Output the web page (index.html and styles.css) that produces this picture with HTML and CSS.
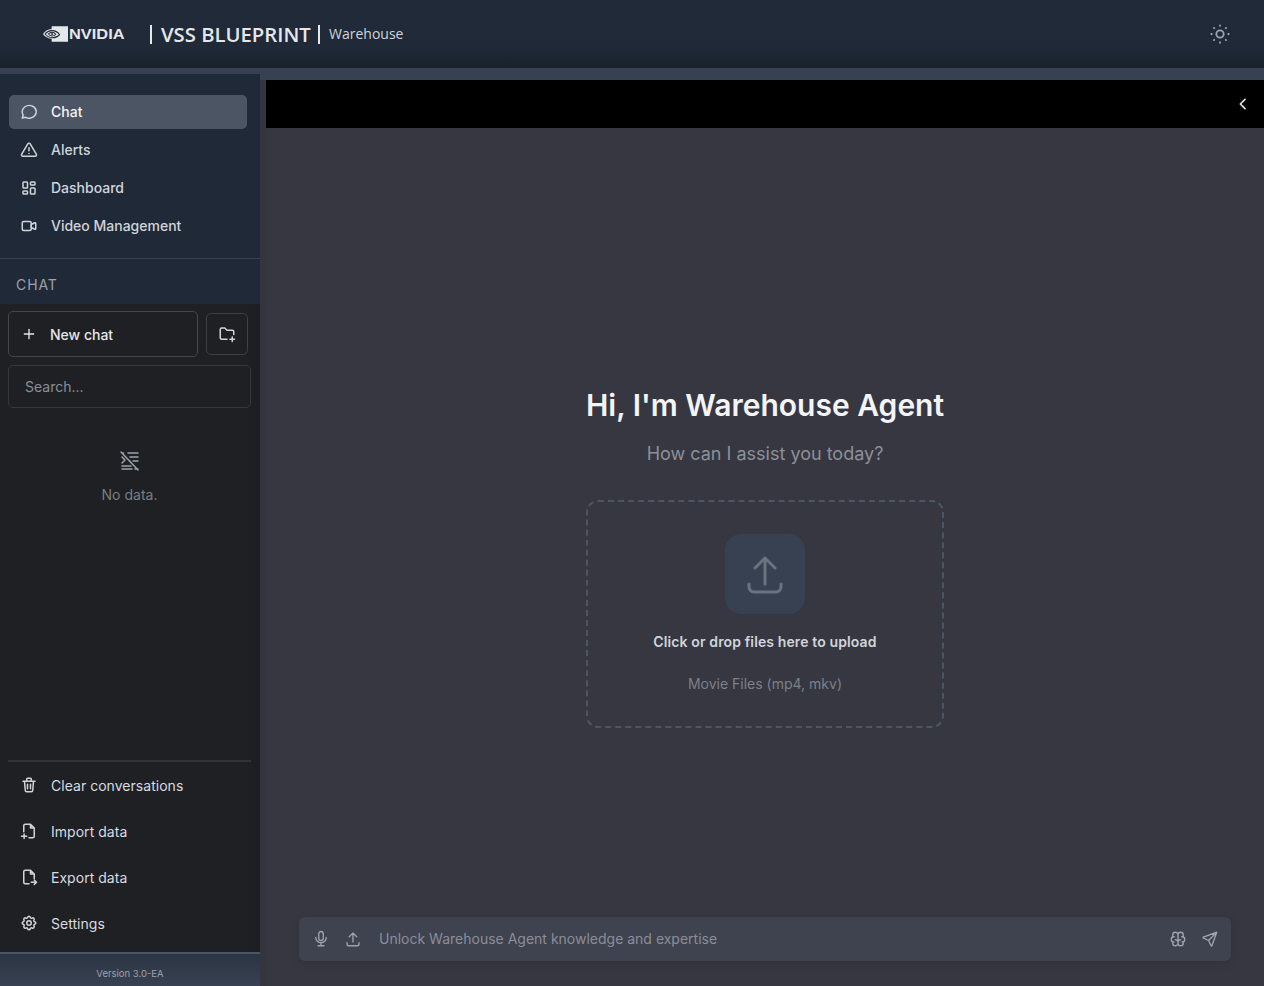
FILE: index.html
```html
<!DOCTYPE html>
<html lang="en">
<head>
<meta charset="utf-8">
<title>VSS Blueprint</title>
<link rel="stylesheet" href="styles.css">
</head>
<body>
<header class="topbar">
  <div class="logo">
    <svg class="logo-eye" viewBox="0 0 26 16" width="26" height="16"><path fill="#e5e7eb" d="M9 0h17v16H9v-3.100C4.500 12.600 1.500 10.400 0 8c1.700-2.600 4.800-4.800 9-5.100z"/><path fill="none" stroke="#1f2937" stroke-width="1.200" d="M2.200 8c1.700-2 4-3.400 7-3.500 3.300-.1 6 1.400 8 4.100-1.900 2.300-4.700 3.500-7.600 3.300C6.500 11.700 4 10.300 2.200 8z"/><path fill="none" stroke="#1f2937" stroke-width="1.100" d="M5.600 8c1-1.200 2.300-1.900 3.800-1.900 1.600 0 2.900.9 3.800 2.100-.9 1.200-2.300 1.900-3.800 1.800C7.900 9.900 6.600 9.200 5.600 8z"/><circle cx="9.400" cy="8" r="1" fill="#1f2937"/></svg>
    <span class="logo-word">NVIDIA</span>
  </div>
  <span class="title-bar"></span>
  <span class="title">VSS BLUEPRINT</span>
  <span class="title-bar title-bar-second"></span>
  <span class="subtitle">Warehouse</span>
  <svg class="theme-icon" viewBox="0 0 24 24" width="22" height="22" fill="none" stroke="#9ca3af" stroke-width="2" stroke-linecap="round"><circle cx="12" cy="12" r="4"/><path d="M12 2.500v.5M12 21v.5M5.300 5.300l.4.4M18.300 18.300l.4.4M2.500 12h.5M21 12h.5M5.300 18.700l.4-.4M18.300 5.700l.4-.4"/></svg>
</header>
<div class="body-row">
  <aside class="sidebar">
    <nav class="nav">
      <a class="nav-item nav-active">
        <svg class="icon" viewBox="0 0 24 24"><path d="M3 20l1.300-3.900C1.800 12.400 2.800 7.600 6.500 5c3.700-2.600 9-2.400 12.300.5 3.400 3 3.800 7.900 1 11.300-2.800 3.400-8 4.400-12.100 2.300L3 20z"/></svg>
        <span>Chat</span>
      </a>
      <a class="nav-item">
        <svg class="icon" viewBox="0 0 24 24"><path d="M12 9v4M12 16.500v.01M10.400 3.900L2.300 17.500A1.900 1.900 0 0 0 4 20.400h16.100a1.900 1.900 0 0 0 1.600-2.900L13.600 3.900a1.900 1.900 0 0 0-3.200 0z"/></svg>
        <span>Alerts</span>
      </a>
      <a class="nav-item">
        <svg class="icon" viewBox="0 0 24 24"><rect x="4" y="4" width="6" height="8" rx="1"/><rect x="4" y="16" width="6" height="4" rx="1"/><rect x="14" y="12" width="6" height="8" rx="1"/><rect x="14" y="4" width="6" height="4" rx="1"/></svg>
        <span>Dashboard</span>
      </a>
      <a class="nav-item">
        <svg class="icon" viewBox="0 0 24 24"><path d="M15 10l4.600-2.300A1 1 0 0 1 21 8.600v6.800a1 1 0 0 1-1.400.9L15 14V10z"/><rect x="3" y="6" width="12" height="12" rx="2"/></svg>
        <span>Video Management</span>
      </a>
    </nav>
    <div class="section-head">CHAT</div>
    <div class="chat-panel">
      <div class="chat-actions">
        <button class="new-chat">
          <svg class="icon icon-plus" viewBox="0 0 24 24"><path d="M12 5v14M5 12h14"/></svg>
          <span>New chat</span>
        </button>
        <button class="new-folder">
          <svg class="icon" viewBox="0 0 24 24"><path d="M12 19H5a2 2 0 0 1-2-2V6a2 2 0 0 1 2-2h4l3 3h7a2 2 0 0 1 2 2v3.500M16 19h6M19 16v6"/></svg>
        </button>
      </div>
      <div class="search">Search...</div>
      <div class="empty">
        <svg class="empty-icon" viewBox="0 0 24 24"><path d="M4 4h1.500M10 4h10M3 3l17 18M4 8l3 3-3 3M12 8h8M15 12h5M12 12h.01M4 17h9M4 20h10M17 20h3"/></svg>
        <div class="empty-text">No data.</div>
      </div>
      <div class="bottom-actions">
        <a class="action">
          <svg class="icon" viewBox="0 0 24 24"><path d="M4 7h16M10 11v6M14 11v6M6 7l1 12a2 2 0 0 0 2 2h6a2 2 0 0 0 2-2l1-12M9 7V4a1 1 0 0 1 1-1h4a1 1 0 0 1 1 1v3"/></svg>
          <span>Clear conversations</span>
        </a>
        <a class="action">
          <svg class="icon" viewBox="0 0 24 24"><path d="M5 13V5a2 2 0 0 1 2-2h7l5 5v11a2 2 0 0 1-2 2h-5M14 3v5h5M2 19h7M5.500 16v6"/></svg>
          <span>Import data</span>
        </a>
        <a class="action">
          <svg class="icon" viewBox="0 0 24 24"><path d="M14 3v5h5M12 21H7a2 2 0 0 1-2-2V5a2 2 0 0 1 2-2h7l5 5v6M15 19h7M19 16l3 3-3 3"/></svg>
          <span>Export data</span>
        </a>
        <a class="action">
          <svg class="icon" viewBox="0 0 24 24"><path d="M10.300 4.300c.4-1.800 3-1.800 3.400 0a1.700 1.700 0 0 0 2.600 1.100c1.500-.9 3.300.8 2.400 2.400a1.700 1.700 0 0 0 1 2.500c1.800.4 1.800 3 0 3.400a1.700 1.700 0 0 0-1 2.600c.9 1.500-.9 3.300-2.400 2.400a1.700 1.700 0 0 0-2.600 1c-.4 1.800-3 1.800-3.400 0a1.700 1.700 0 0 0-2.600-1c-1.500.9-3.300-.9-2.400-2.400a1.700 1.700 0 0 0-1-2.600c-1.800-.4-1.800-3 0-3.400a1.700 1.700 0 0 0 1-2.500c-.9-1.600.9-3.300 2.400-2.400a1.700 1.700 0 0 0 2.600-1.100z"/><circle cx="12" cy="12" r="3"/></svg>
          <span>Settings</span>
        </a>
      </div>
    </div>
    <div class="version">Version 3.0-EA</div>
  </aside>
  <main class="main">
    <div class="black-bar">
      <svg class="collapse" viewBox="0 0 24 24" width="16" height="16"><path d="M15 5l-7 7 7 7"/></svg>
    </div>
    <div class="content">
      <div class="welcome">
        <h1 class="greeting">Hi, I'm Warehouse Agent</h1>
        <p class="assist">How can I assist you today?</p>
        <div class="dropzone">
          <div class="upload-tile">
            <svg viewBox="0 0 24 24" width="48" height="48"><path d="M4 17v1.500A2.500 2.500 0 0 0 6.500 21h11a2.500 2.500 0 0 0 2.500-2.500V17M7 9l5-5 5 5M12 4v13"/></svg>
          </div>
          <div class="drop-title">Click or drop files here to upload</div>
          <div class="drop-sub">Movie Files (mp4, mkv)</div>
        </div>
      </div>
      <div class="composer">
        <svg class="c-icon" viewBox="0 0 24 24"><rect x="9" y="2" width="6" height="12" rx="3"/><path d="M5 10a7 7 0 0 0 14 0M8 21h8M12 17v4"/></svg>
        <svg class="c-icon c-upload" viewBox="0 0 24 24"><path d="M4 17v2a2 2 0 0 0 2 2h12a2 2 0 0 0 2-2v-2M7 9l5-5 5 5M12 4v12"/></svg>
        <span class="placeholder">Unlock Warehouse Agent knowledge and expertise</span>
        <svg class="c-icon" viewBox="0 0 24 24"><path d="M15.500 13a3.500 3.500 0 0 0-3.500 3.500v1a3.500 3.500 0 0 0 7 0v-1.800M8.500 13a3.500 3.500 0 0 1 3.500 3.500v1a3.500 3.500 0 0 1-7 0v-1.800M17.500 16a3.500 3.500 0 0 0 0-7h-.5M19 9.300V6.500a3.500 3.500 0 0 0-7 0M6.500 16a3.500 3.500 0 0 1 0-7h.5M5 9.300V6.500a3.500 3.500 0 0 1 7 0v10"/></svg>
        <svg class="c-icon c-send" viewBox="0 0 24 24"><path d="M10 14L21 3M21 3l-6.500 18a.5.5 0 0 1-.9 0L10 14l-7-3.500a.5.5 0 0 1 0-.9L21 3z"/></svg>
      </div>
    </div>
  </main>
</div>
</body>
</html>
```
FILE: styles.css
```css
* { box-sizing: border-box; }
html, body { margin: 0; height: 100%; }
body {
  width: 1264px;
  height: 986px;
  overflow: hidden;
  display: flex;
  flex-direction: column;
  background: #374151;
  font-family: Inter, "Liberation Sans", sans-serif;
  color: #e5e7eb;
}
.topbar {
  height: 68px;
  flex: none;
  display: flex;
  align-items: center;
  padding-left: 43px;
  padding-right: 33px;
  background: linear-gradient(180deg, #202a39 0%, #1f2937 70%, #1a212c 100%);
}
.logo { display: flex; align-items: center; width: 107px; gap: 1px; }
.logo-eye { flex: none; width: 25px; height: 16px; }
.logo-word {
  font-family: "Liberation Sans", sans-serif;
  font-weight: 700;
  font-size: 14px;
  color: #e5e7eb;
  transform: scaleX(1.17);
  transform-origin: left center;
}
.title-bar { width: 2px; height: 19px; background: #e5e7eb; flex: none; }
.title {
  font-family: "Open Sans", sans-serif;
  font-weight: 600;
  font-size: 20.25px;
  color: #e5e7eb;
  margin-left: 9px;
  white-space: nowrap;
  width: 157px;
}
.subtitle {
  font-size: 14px;
  line-height: 18px;
  padding-bottom: 1px;
  color: #d1d5db;
  margin-left: 9px;
  font-family: "Open Sans", sans-serif;
}
.theme-icon { margin-left: auto; }
.body-row { flex: 1; display: flex; min-height: 0; padding-top: 6px; }
.sidebar {
  width: 260px;
  flex: none;
  display: flex;
  flex-direction: column;
  background: #1f2023;
  box-shadow: inset -10px 0 10px -8px rgba(17, 24, 39, .3);
}
.nav {
  height: 185px;
  flex: none;
  padding: 21px 13px 0 9px;
  background: #1f2937;
  border-bottom: 1px solid #374151;
  display: flex;
  flex-direction: column;
  gap: 4px;
}
.nav-item {
  height: 34px;
  flex: none;
  display: flex;
  align-items: center;
  gap: 13px;
  padding-left: 11px;
  padding-bottom: 1px;
  border-radius: 5px;
  font-size: 14px;
  font-weight: 500;
  color: #d1d5db;
}
.nav-active { background: #4b5563; color: #f3f4f6; }
.icon {
  width: 18px;
  height: 18px;
  flex: none;
  fill: none;
  stroke: #d1d5db;
  stroke-width: 2;
  stroke-linecap: round;
  stroke-linejoin: round;
}
.section-head {
  height: 45px;
  flex: none;
  display: flex;
  align-items: center;
  padding-left: 16px;
  padding-top: 5px;
  background: #1f2937;
  font-size: 14px;
  letter-spacing: .9px;
  color: #9ca3af;
}
.chat-panel { flex: 1; display: flex; flex-direction: column; min-height: 0; padding: 7px 8px 0; }
.chat-actions { display: flex; align-items: center; gap: 8px; }
button { font: inherit; color: inherit; background: none; cursor: pointer; }
.new-chat {
  width: 190px;
  height: 46px;
  display: flex;
  align-items: center;
  gap: 13px;
  padding: 0 0 0 12px;
  border: 1px solid #44474e;
  border-radius: 5px;
  font-size: 14px;
  font-weight: 500;
  color: #e5e7eb;
}
.icon-plus { width: 16px; height: 16px; stroke: #e5e7eb; }
.new-folder {
  width: 42px;
  height: 42px;
  display: flex;
  align-items: center;
  justify-content: center;
  padding: 0;
  border: 1px solid #3d3f45;
  border-radius: 5px;
}
.search {
  width: 243px;
  height: 43px;
  margin-top: 8px;
  border: 1px solid #36383d;
  border-radius: 5px;
  display: flex;
  align-items: center;
  padding-left: 16px;
  font-size: 14px;
  color: #8b8f98;
}
.empty { display: flex; flex-direction: column; align-items: center; padding-top: 41px; width: 243px; }
.empty-icon {
  width: 24px;
  height: 24px;
  fill: none;
  stroke: #9ca3af;
  stroke-width: 1.500;
  stroke-linecap: round;
  stroke-linejoin: round;
}
.empty-text { margin-top: 13px; font-size: 14px; color: #7a7d85; }
.bottom-actions {
  margin-top: auto;
  width: 243px;
  border-top: 2px solid #313338;
  padding: 0 0 6px;
  display: flex;
  flex-direction: column;
}
.action {
  height: 46px;
  display: flex;
  align-items: center;
  gap: 13px;
  padding-left: 12px;
  font-size: 14px;
  font-weight: 400;
  letter-spacing: .03px;
  color: #d8dbe0;
}
.version {
  height: 34px;
  flex: none;
  display: flex;
  align-items: center;
  justify-content: center;
  padding-top: 6px;
  background: linear-gradient(180deg, #2c3542, #374151);
  border-top: 2px solid #4b5563;
  font-size: 9.5px;
  color: #9ca3af;
}
.main {
  flex: 1;
  min-width: 0;
  display: flex;
  flex-direction: column;
  margin-top: -6px;
  padding-top: 12px;
  padding-left: 6px;
  background: linear-gradient(180deg, #374151 0, #374151 12px, #33353f 12px);
}
.black-bar {
  height: 48px;
  flex: none;
  background: #000;
  display: flex;
  align-items: center;
  justify-content: flex-end;
  padding-right: 13px;
}
.collapse { fill: none; stroke: #e5e7eb; stroke-width: 2.400; stroke-linecap: round; stroke-linejoin: round; }
.content {
  flex: 1;
  min-height: 0;
  background: #363741;
  display: flex;
  flex-direction: column;
  align-items: center;
  padding: 0 33px 25px;
}
.welcome { display: flex; flex-direction: column; align-items: center; padding-top: 257px; flex: 1; }
.greeting { margin: 0; font-size: 30px; line-height: 40px; font-weight: 600; color: #f3f4f6; white-space: nowrap; }
.assist { margin: 17px 0 0; font-size: 18px; line-height: 24px; color: #8d9099; }
.dropzone {
  width: 358px;
  height: 228px;
  margin-top: 34px;
  border: 2px dashed #4b5563;
  border-radius: 12px;
  display: flex;
  flex-direction: column;
  align-items: center;
  padding-top: 32px;
}
.upload-tile {
  width: 80px;
  height: 80px;
  border-radius: 16px;
  background: #374151;
  display: flex;
  align-items: center;
  justify-content: center;
}
.upload-tile svg { fill: none; stroke: #6b7280; stroke-width: 1.500; stroke-linecap: round; stroke-linejoin: round; }
.drop-title { margin-top: 18px; font-size: 14px; line-height: 20px; font-weight: 600; letter-spacing: .12px; color: #d1d5db; }
.drop-sub { margin-top: 22px; font-size: 14px; line-height: 20px; color: #7d8089; }
.composer {
  width: 932px;
  height: 44px;
  flex: none;
  display: flex;
  align-items: center;
  padding: 0 12px 0 13px;
  gap: 14px;
  background: #3f424f;
  border-radius: 6px;
  box-shadow: 0 2px 8px rgba(0, 0, 0, .12);
}
.c-icon {
  width: 18px;
  height: 18px;
  flex: none;
  fill: none;
  stroke: #9ca3af;
  stroke-width: 1.800;
  stroke-linecap: round;
  stroke-linejoin: round;
}
.placeholder { flex: 1; font-size: 14px; line-height: 18px; padding-bottom: 1px; color: #8b8e98; margin-left: 3px; }
```
